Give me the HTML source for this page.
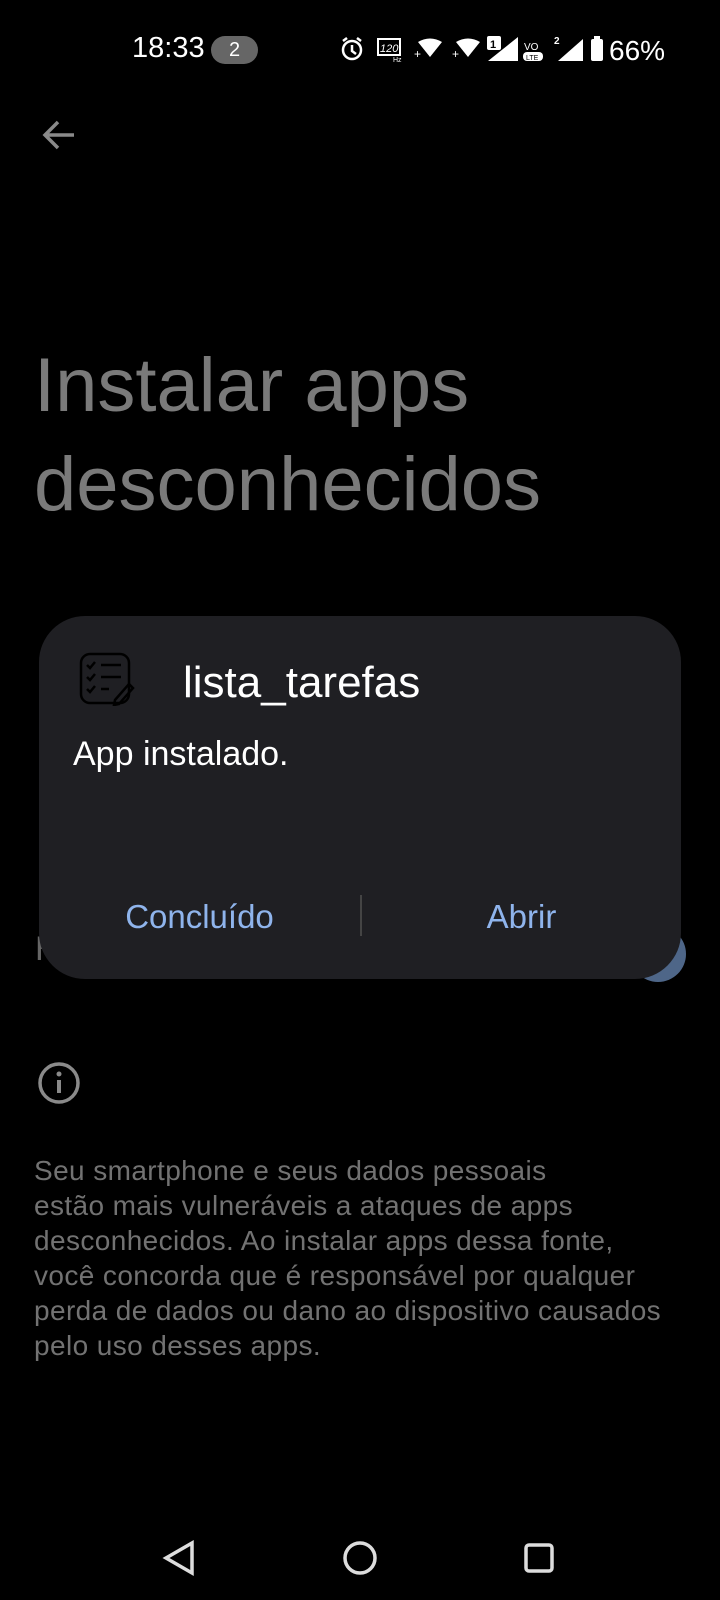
<!DOCTYPE html>
<html><head><meta charset="utf-8"><style>
*{margin:0;padding:0;box-sizing:border-box}
body{width:720px;height:1600px;background:#000;position:relative;overflow:hidden;font-family:"Liberation Sans",sans-serif}
.a{position:absolute;white-space:nowrap}
</style></head><body>
<!-- status bar -->
<div class="a" style="left:132px;top:32px;font-size:29px;color:#fff">18:33</div>
<div class="a" style="left:211px;top:36px;width:47px;height:28px;border-radius:14px;background:#666;color:#fff;font-size:20px;text-align:center;line-height:28px">2</div>
<svg class="a" style="left:338px;top:32px" width="345" height="34" viewBox="0 0 345 34">
 <g fill="none" stroke="#fff" stroke-width="2.5"><circle cx="14" cy="18" r="9"/><path d="M14 13v6l4 3M5 9l4-3M23 9l-4-3"/></g>
 <rect x="40" y="7" width="22" height="16" fill="none" stroke="#fff" stroke-width="2"/><text x="42" y="20" font-size="11" fill="#fff" font-style="italic" font-family="Liberation Sans">120</text><text x="55" y="30" font-size="7" fill="#fff">Hz</text>
 <path d="M80 10 Q92 3 104 10 L92 25Z" fill="#fff"/><text x="76" y="26" font-size="12" fill="#fff">+</text>
 <path d="M118 10 Q130 3 142 10 L130 25Z" fill="#fff"/><text x="114" y="26" font-size="12" fill="#fff">+</text>
 <rect x="149" y="4" width="14" height="14" rx="2" fill="#fff"/><text x="152" y="16" font-size="11" font-weight="bold" fill="#000">1</text>
 <path d="M150 29 L180 5 V29Z" fill="#fff"/>
 <text x="186" y="18" font-size="10" fill="#fff">VO</text><rect x="185" y="20" width="20" height="9" rx="4" fill="#fff"/><text x="188" y="28" font-size="7" fill="#000">LTE</text>
 <text x="216" y="12" font-size="10" fill="#fff" font-weight="bold">2</text>
 <path d="M220 29 L245 7 V29Z" fill="#fff"/>
 <rect x="253" y="7" width="12" height="22" rx="2" fill="#fff"/><rect x="256" y="4" width="6" height="3" fill="#fff"/>
 <text x="271" y="28" font-size="28" fill="#fff" font-family="Liberation Sans">66%</text>
</svg>
<!-- back -->
<svg class="a" style="left:40px;top:118px" width="38" height="34" viewBox="0 0 38 34"><path d="M34 17H6M18 4L5 17l13 13" fill="none" stroke="#8a8a8a" stroke-width="3.5"/></svg>
<div class="a" style="left:34px;top:336px;font-size:76px;color:#7a7a7a;line-height:99px">Instalar apps<br>desconhecidos</div>
<div class="a" style="left:35px;top:930px;font-size:34px;color:#666">H</div>
<div class="a" style="left:630px;top:926px;width:56px;height:56px;border-radius:28px;background:#4e6688"></div>
<!-- dialog -->
<div class="a" style="left:39px;top:616px;width:642px;height:363px;border-radius:46px;background:#1f1f23"></div>
<svg class="a" style="left:79px;top:652px" width="56" height="54" viewBox="0 0 56 54"><g fill="none" stroke="#000" stroke-width="2.5"><rect x="2" y="2" width="48" height="49" rx="9"/><path d="M8 13l3 3 5-6M8 25l3 3 5-6M8 37l3 3 5-6M22 13h20M22 25h20M22 37h8M36 48l14-16 4 4-14 16-5 1z"/></g></svg>
<div class="a" style="left:183px;top:658px;font-size:44px;color:#fff">lista_tarefas</div>
<div class="a" style="left:73px;top:735px;font-size:34px;color:#fff">App instalado.</div>
<div class="a" style="left:39px;top:898px;width:321px;text-align:center;font-size:33px;color:#8fb4ec">Concluído</div>
<div class="a" style="left:360px;top:895px;width:2px;height:41px;background:#444"></div>
<div class="a" style="left:362px;top:898px;width:319px;text-align:center;font-size:33px;color:#8fb4ec">Abrir</div>
<!-- info -->
<svg class="a" style="left:37px;top:1061px" width="44" height="44" viewBox="0 0 44 44"><circle cx="22" cy="22" r="19" fill="none" stroke="#8a8a8a" stroke-width="3.5"/><rect x="20" y="19" width="4" height="13" fill="#8a8a8a"/><circle cx="22" cy="13" r="2.5" fill="#8a8a8a"/></svg>
<div class="a" style="left:34px;top:1153px;font-size:28px;letter-spacing:0.4px;line-height:35px;color:#727272">Seu smartphone e seus dados pessoais<br>estão mais vulneráveis a ataques de apps<br>desconhecidos. Ao instalar apps dessa fonte,<br>você concorda que é responsável por qualquer<br>perda de dados ou dano ao dispositivo causados<br>pelo uso desses apps.</div>
<!-- nav -->
<svg class="a" style="left:160px;top:1538px" width="400" height="40" viewBox="0 0 400 40"><g fill="none" stroke="#ddd" stroke-width="3.5"><path d="M32 5 L6 20 L32 35Z"/><circle cx="200" cy="20" r="15"/><rect x="366" y="7" width="26" height="26" rx="3"/></g></svg>
</body></html>
